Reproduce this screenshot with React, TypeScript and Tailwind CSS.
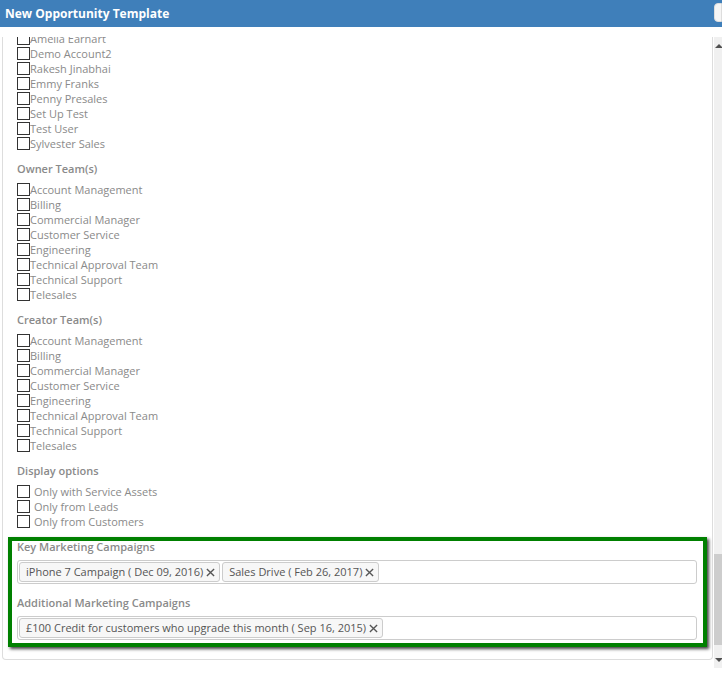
import React from 'react'

const users = [
  'Amelia Earhart',
  'Demo Account2',
  'Rakesh Jinabhai',
  'Emmy Franks',
  'Penny Presales',
  'Set Up Test',
  'Test User',
  'Sylvester Sales',
]

const teams = [
  'Account Management',
  'Billing',
  'Commercial Manager',
  'Customer Service',
  'Engineering',
  'Technical Approval Team',
  'Technical Support',
  'Telesales',
]

const displayOptions = ['Only with Service Assets', 'Only from Leads', 'Only from Customers']

function CheckRow({ label, gap }: { label: string; gap?: boolean }) {
  return (
    <label className="flex h-[15px] items-center">
      <span className="h-[13px] w-[13px] shrink-0 border border-[#333] bg-white" />
      <span className={`leading-[15px] text-[#8a8a8a] ${gap ? 'ml-[4px]' : ''}`}>{label}</span>
    </label>
  )
}

function Heading({ children }: { children: React.ReactNode }) {
  return <div className="mt-[10px] mb-[6px] h-[15px] font-semibold leading-[15px] text-[#8a8a8a]">{children}</div>
}

function Tag({ text }: { text: string }) {
  return (
    <span className="flex h-[20px] items-center rounded-[3px] border border-[#ccc] bg-[#f7f7f7] pl-[6px] pr-[4px] text-[#555]">
      {text}
      <svg viewBox="0 0 10 10" className="ml-[3px] h-[9px] w-[9px]" stroke="#555" strokeWidth="1.5">
        <path d="M1 1 L9 9 M9 1 L1 9" />
      </svg>
    </span>
  )
}

function TagInput({ tags }: { tags: string[] }) {
  return (
    <div className="flex h-[24px] items-center gap-[2px] rounded-[3px] border border-[#ccc] bg-white px-[1px]">
      {tags.map(t => (
        <Tag key={t} text={t} />
      ))}
    </div>
  )
}

export default function App() {
  return (
    <div
      className="relative h-[673px] w-[722px] overflow-hidden bg-white text-[11px]"
      style={{ fontFamily: '"Open Sans", "Noto Sans", sans-serif' }}
    >
      {/* title bar */}
      <div className="flex h-[27px] items-center justify-between bg-[#3f7fba] pl-[5px]">
        <span className="text-[12px] font-bold text-white">New Opportunity Template</span>
        <span className="h-[19px] w-[8px] self-start mt-[3px] rounded-l-[4px] border border-[#ddd] bg-[#f5f5f5]" />
      </div>

      <div className="flex h-[646px] pt-[10px]">
        {/* scroll viewport */}
        <div className="flex-1 overflow-hidden">
          <div className="ml-[2px] mr-[1px] rounded-b-[4px] border-x border-b border-[#ddd] pb-[12px]">
            <div className="mt-[-6px] px-[14px]">
              {users.map(u => (
                <CheckRow key={u} label={u} />
              ))}
              <Heading>Owner Team(s)</Heading>
              {teams.map(t => (
                <CheckRow key={t} label={t} />
              ))}
              <Heading>Creator Team(s)</Heading>
              {teams.map(t => (
                <CheckRow key={t} label={t} />
              ))}
              <Heading>Display options</Heading>
              {displayOptions.map(o => (
                <CheckRow key={o} label={o} gap />
              ))}
            </div>

            <div className="mx-[5px] mt-[8px] border-[4px] border-[#008000] pl-[5px] pr-[6px] pb-[3px] shadow-[2px_2px_3px_#444]">
              <div className="h-[12px] font-semibold leading-[12px] text-[#8a8a8a]">Key Marketing Campaigns</div>
              <div className="mt-[7px]">
                <TagInput tags={['iPhone 7 Campaign ( Dec 09, 2016)', 'Sales Drive ( Feb 26, 2017)']} />
              </div>
              <div className="mt-[13px] h-[12px] font-semibold leading-[12px] text-[#8a8a8a]">Additional Marketing Campaigns</div>
              <div className="mt-[7px]">
                <TagInput tags={['£100 Credit for customers who upgrade this month ( Sep 16, 2015)']} />
              </div>
            </div>
          </div>
        </div>

        {/* scrollbar */}
        <div className="flex h-[631px] w-[8px] flex-col bg-[#f0f0f0]">
          <div className="flex h-[17px] items-center justify-end">
            <svg viewBox="0 0 8 8" className="h-[8px] w-[8px]">
              <path d="M5 2 L9 6 L1 6 Z" fill="#505050" />
            </svg>
          </div>
          <div className="flex-1" />
          <div className="h-[91px] bg-[#cdcdcd]" />
          <div className="h-[6px]" />
          <div className="flex h-[17px] items-center justify-end">
            <svg viewBox="0 0 8 8" className="h-[8px] w-[8px]">
              <path d="M5 6 L9 2 L1 2 Z" fill="#505050" />
            </svg>
          </div>
        </div>
      </div>
    </div>
  )
}
